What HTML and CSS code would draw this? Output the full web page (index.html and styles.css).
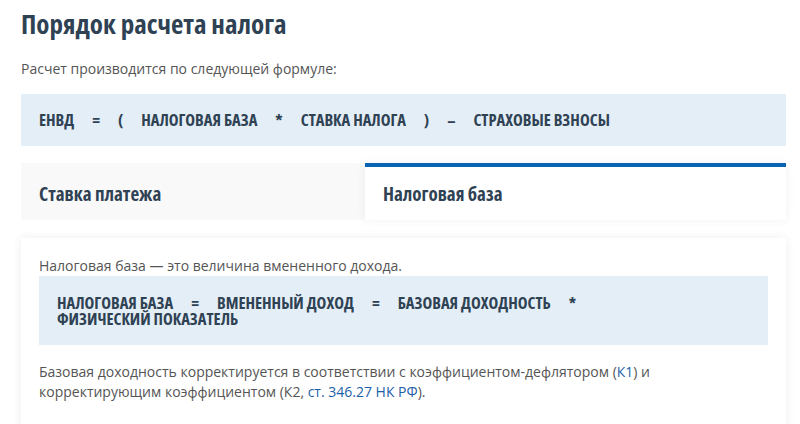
FILE: index.html
```html
<!DOCTYPE html>
<html lang="ru">
<head>
<meta charset="utf-8">
<title>Порядок расчета налога</title>
<link rel="stylesheet" href="styles.css">
</head>
<body>
<main class="page">
  <h1 class="title">Порядок расчета налога</h1>
  <p class="lead">Расчет производится по следующей формуле:</p>
  <div class="formula">
    <span>ЕНВД</span><span>=</span><span>(</span><span>НАЛОГОВАЯ БАЗА</span><span>*</span><span>СТАВКА НАЛОГА</span><span>)</span><span>–</span><span>СТРАХОВЫЕ ВЗНОСЫ</span>
  </div>
  <div class="tabs">
    <div class="tab">Ставка платежа</div>
    <div class="tab tab-active">Налоговая база</div>
  </div>
  <section class="panel">
    <p class="text">Налоговая база — это величина вмененного дохода.</p>
    <div class="formula formula-inner">
      <span>НАЛОГОВАЯ БАЗА</span><span>=</span><span>ВМЕНЕННЫЙ ДОХОД</span><span>=</span><span>БАЗОВАЯ ДОХОДНОСТЬ</span><span>*</span><span>ФИЗИЧЕСКИЙ ПОКАЗАТЕЛЬ</span>
    </div>
    <p class="text text-after">Базовая доходность корректируется в соответствии с коэффициентом-дефлятором (<a href="#">К1</a>) и корректирующим коэффициентом (К2, <a href="#">ст. 346.27 НК РФ</a>).</p>
  </section>
</main>
</body>
</html>
```
FILE: styles.css
```css
html, body {
  margin: 0;
  padding: 0;
  background: #fff;
}
body {
  font-family: "Open Sans", "Liberation Sans", sans-serif;
  color: #555;
  font-size: 14px;
  overflow: hidden;
}
.page {
  padding: 6px 14px 0 21px;
}
.title,
.formula,
.tab {
  font-family: "Open Sans", "Roboto Condensed", sans-serif;
  font-stretch: 75%;
  font-weight: 700;
  color: #2f4254;
}
.title {
  margin: 0;
  font-size: 27px;
  line-height: 36px;
}
.lead {
  margin: 17px 0 0;
  line-height: 20px;
}
.formula {
  margin-top: 15px;
  background: #e4eef7;
  padding: 16px 18px;
  display: flex;
  flex-wrap: wrap;
  column-gap: 18px;
  font-size: 16.5px;
  line-height: 20px;
}
.tabs {
  margin-top: 17px;
  display: flex;
}
.tab {
  flex: 0 0 344px;
  height: 57px;
  box-sizing: border-box;
  padding: 19px 18px 0;
  background: #f9f9f9;
  font-size: 19px;
  line-height: 24px;
}
.tab-active {
  flex: 1 1 auto;
  background: #fff;
  border-top: 4px solid #0b63b3;
  padding-top: 15px;
  box-shadow: 0 0 10px rgba(0, 0, 0, 0.06);
}
.panel {
  margin-top: 18px;
  background: #fff;
  box-shadow: 0 0 10px rgba(0, 0, 0, 0.07);
  padding: 18px 18px 30px;
  min-height: 160px;
}
.text {
  margin: 0;
  line-height: 20px;
}
.formula-inner {
  margin-top: 0;
  padding: 19px 18px 18px;
  line-height: 16px;
}
.text-after {
  margin-top: 17px;
}
a {
  color: #1d5fa8;
  text-decoration: none;
}
```
